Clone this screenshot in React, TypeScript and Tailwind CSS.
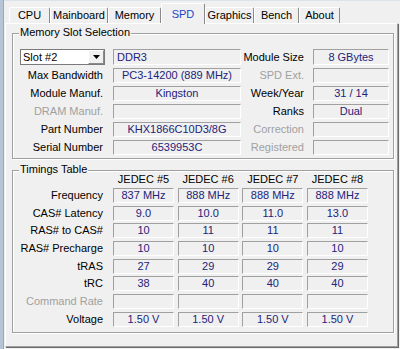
import React from "react";

const FONT = "font-['Liberation_Sans',Arial,sans-serif]";

function Box({
  children,
  className = "",
  align = "center",
}: {
  children?: React.ReactNode;
  className?: string;
  align?: "center" | "left";
}) {
  return (
    <div
      className={`flex items-center border border-t-[#a0a0a0] border-l-[#a0a0a0] border-b-white border-r-white bg-[#f0f0f0] text-[#23237a] leading-[13px] whitespace-nowrap overflow-hidden ${
        align === "center" ? "justify-center" : "justify-start pl-[3px]"
      } ${className}`}
    >
      {children}
    </div>
  );
}

function Group({
  title,
  className = "",
  children,
}: {
  title: string;
  className?: string;
  children: React.ReactNode;
}) {
  return (
    <div
      className={`relative border border-[#a0a0a0] shadow-[inset_1px_1px_0_#ffffff,1px_1px_0_#ffffff] ${className}`}
    >
      <div className="absolute -top-[8px] left-[6px] bg-[#f0f0f0] px-[1px] leading-[13px] text-[#000]">
        {title}
      </div>
      {children}
    </div>
  );
}

function Tab({
  label,
  w,
  selected = false,
}: {
  label: string;
  w: string;
  selected?: boolean;
}) {
  if (selected) {
    return (
      <div
        className={`relative z-10 -mb-[1px] h-[21px] ${w} flex items-start justify-center pt-[4px] bg-[#f0f0f0] border-t border-l border-t-white border-l-white border-r border-r-[#8a8a8a] rounded-tl-[2px] rounded-tr-[2px] text-[#2346c8] leading-[13px]`}
      >
        {label}
      </div>
    );
  }
  return (
    <div
      className={`h-[16px] ${w} flex items-center justify-center bg-[#f0f0f0] border-t border-l border-t-white border-l-white border-r border-r-[#8a8a8a] rounded-tl-[2px] rounded-tr-[2px] text-[#000] leading-[13px]`}
    >
      {label}
    </div>
  );
}

function MemRow({
  label,
  labelDisabled = false,
  value,
  rlabel,
  rlabelDisabled = false,
  rvalue,
}: {
  label: string;
  labelDisabled?: boolean;
  value?: string;
  rlabel: string;
  rlabelDisabled?: boolean;
  rvalue?: string;
}) {
  return (
    <div className="flex items-center h-[15px]">
      <div
        className={`w-[90px] text-right leading-[13px] ${
          labelDisabled ? "text-[#a0a0a0]" : "text-[#000]"
        }`}
      >
        {label}
      </div>
      <Box className="ml-[10px] w-[128px] h-[15px]">{value}</Box>
      <div
        className={`w-[63px] text-right leading-[13px] ${
          rlabelDisabled ? "text-[#a0a0a0]" : "text-[#000]"
        }`}
      >
        {rlabel}
      </div>
      <Box className="ml-[9px] w-[76px] h-[15px]">{rvalue}</Box>
    </div>
  );
}

const timings: { label: string; disabled?: boolean; vals: string[] }[] = [
  { label: "Frequency", vals: ["837 MHz", "888 MHz", "888 MHz", "888 MHz"] },
  { label: "CAS# Latency", vals: ["9.0", "10.0", "11.0", "13.0"] },
  { label: "RAS# to CAS#", vals: ["10", "11", "11", "11"] },
  { label: "RAS# Precharge", vals: ["10", "10", "10", "10"] },
  { label: "tRAS", vals: ["27", "29", "29", "29"] },
  { label: "tRC", vals: ["38", "40", "40", "40"] },
  { label: "Command Rate", disabled: true, vals: ["", "", "", ""] },
  { label: "Voltage", vals: ["1.50 V", "1.50 V", "1.50 V", "1.50 V"] },
];

export default function App() {
  return (
    <div
      className={`${FONT} text-[11px] w-[400px] h-[349px] bg-[#f0f0f0] flex overflow-hidden select-none`}
    >
      {/* window frame strip */}
      <div className="w-[4px] h-full bg-[#b7c4d6] border-r border-r-[#9aa8bc]" />
      <div className="flex-1 flex flex-col">
        {/* tab strip */}
        <div className="h-[23px] flex items-end pl-[5px] border-t border-t-[#dbe3ec]">
          <Tab label="CPU" w="w-[41px]" />
          <Tab label="Mainboard" w="w-[58px]" />
          <Tab label="Memory" w="w-[53px]" />
          <Tab label="SPD" w="w-[44px]" selected />
          <Tab label="Graphics" w="w-[49px]" />
          <Tab label="Bench" w="w-[45px]" />
          <Tab label="About" w="w-[41px]" />
        </div>
        {/* panel */}
        <div className="ml-[1px] w-[393px] h-[324px] border-t border-l border-t-white border-l-white border-r border-b border-r-[#a0a0a0] border-b-[#a0a0a0] shadow-[1px_1px_0_#6b6b6b] flex flex-col pl-[6px]">
          <Group title="Memory Slot Selection" className="mt-[9px] w-[382px] h-[126px]">
            <div className="flex flex-col pt-[15px] gap-[3px]">
              {/* row 0 */}
              <div className="flex items-center h-[16px]">
                <div className="ml-[7px] w-[85px] h-[16px] flex border border-[#7a7a7a] bg-white">
                  <div className="flex-1 flex items-center pl-[2px] leading-[13px] text-[#000]">
                    Slot #2
                  </div>
                  <div className="w-[16px] h-full flex items-center justify-center bg-[#f0f0f0] border-l border-t border-l-white border-t-white border-r border-b border-r-[#8a8a8a] border-b-[#8a8a8a]">
                    <svg width="7" height="4" viewBox="0 0 7 4">
                      <path d="M0 0 H7 L3.5 4 Z" fill="#000" />
                    </svg>
                  </div>
                </div>
                <Box align="left" className="ml-[8px] w-[128px] h-[16px]">
                  DDR3
                </Box>
                <div className="w-[63px] text-right leading-[13px] text-[#000]">
                  Module Size
                </div>
                <Box className="ml-[9px] w-[76px] h-[16px]">8 GBytes</Box>
              </div>
              <MemRow
                label="Max Bandwidth"
                value="PC3-14200 (889 MHz)"
                rlabel="SPD Ext."
                rlabelDisabled
              />
              <MemRow
                label="Module Manuf."
                value="Kingston"
                rlabel="Week/Year"
                rvalue="31 / 14"
              />
              <MemRow
                label="DRAM Manuf."
                labelDisabled
                rlabel="Ranks"
                rvalue="Dual"
              />
              <MemRow
                label="Part Number"
                value="KHX1866C10D3/8G"
                rlabel="Correction"
                rlabelDisabled
              />
              <MemRow
                label="Serial Number"
                value="6539953C"
                rlabel="Registered"
                rlabelDisabled
              />
            </div>
          </Group>

          <Group title="Timings Table" className="mt-[11px] w-[382px] h-[163px]">
            <div className="flex flex-col pt-[1px]">
              <div className="flex h-[14px] items-center">
                <div className="w-[90px]" />
                <div className="ml-[10px] flex gap-[3.67px]">
                  {["JEDEC #5", "JEDEC #6", "JEDEC #7", "JEDEC #8"].map((h) => (
                    <div key={h} className="w-[61px] text-center leading-[13px] text-[#000]">
                      {h}
                    </div>
                  ))}
                </div>
              </div>
              <div className="mt-[2px] flex flex-col gap-[2.7px]">
                {timings.map((r) => (
                  <div key={r.label} className="flex items-center h-[15px]">
                    <div
                      className={`w-[90px] text-right leading-[13px] ${
                        r.disabled ? "text-[#a0a0a0]" : "text-[#000]"
                      }`}
                    >
                      {r.label}
                    </div>
                    <div className="ml-[10px] flex gap-[3.67px]">
                      {r.vals.map((v, i) => (
                        <Box key={i} className="w-[61px] h-[15px]">
                          {v}
                        </Box>
                      ))}
                    </div>
                  </div>
                ))}
              </div>
            </div>
          </Group>
        </div>
      </div>
    </div>
  );
}
